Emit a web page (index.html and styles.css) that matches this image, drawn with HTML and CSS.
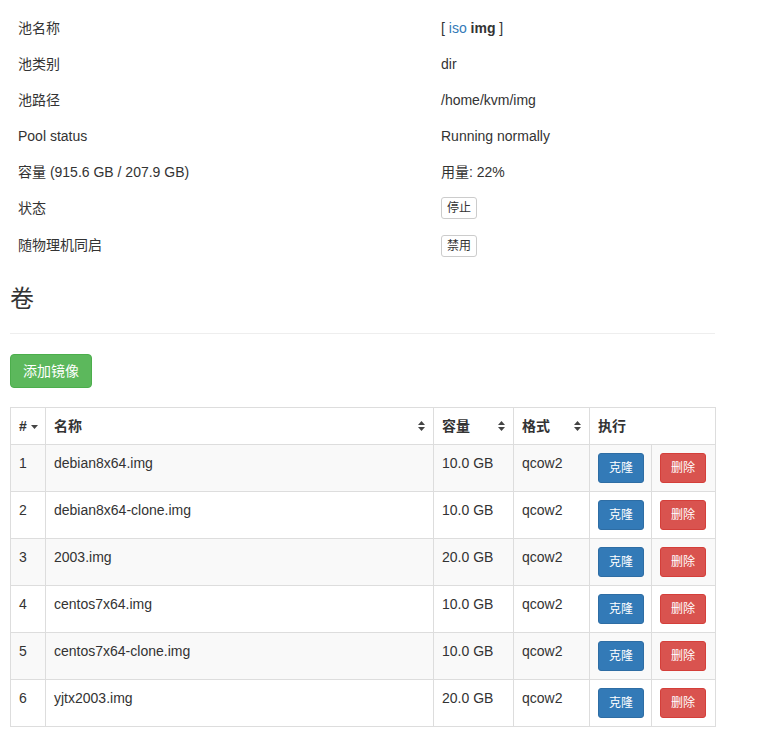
FILE: index.html
```html
<!DOCTYPE html>
<html lang="zh-CN">
  <head>
    <meta charset="UTF-8" />
    <meta name="viewport" content="width=device-width, initial-scale=1.0" />
    <title>存储池</title>
    <link rel="stylesheet" href="styles.css">
  </head>
  <body>
    <div class="container">
      <table class="info-table">
        <colgroup>
          <col class="info-label" />
          <col />
        </colgroup>
        <tr>
          <td>池名称</td>
          <td>[ <a href="#">iso</a> <strong>img</strong> ]</td>
        </tr>
        <tr>
          <td>池类别</td>
          <td>dir</td>
        </tr>
        <tr>
          <td>池路径</td>
          <td>/home/kvm/img</td>
        </tr>
        <tr>
          <td>Pool status</td>
          <td>Running normally</td>
        </tr>
        <tr>
          <td>容量 (915.6 GB / 207.9 GB)</td>
          <td>用量: 22%</td>
        </tr>
        <tr class="btn-row">
          <td>状态</td>
          <td><button class="btn btn-default btn-xs">停止</button></td>
        </tr>
        <tr class="btn-row">
          <td>随物理机同启</td>
          <td><button class="btn btn-default btn-xs">禁用</button></td>
        </tr>
      </table>

      <h3 class="page-header">卷</h3>

      <button class="btn btn-success">添加镜像</button>

      <table class="volumes">
        <colgroup>
          <col class="col-id" />
          <col class="col-name" />
          <col class="col-size" />
          <col class="col-format" />
          <col class="col-clone" />
          <col class="col-delete" />
        </colgroup>
        <thead>
          <tr>
            <th class="sorted">#<svg class="caret" width="7" height="4" viewBox="0 0 7 4"><path d="M0 0h7L3.5 4z" /></svg></th>
            <th>名称<svg class="sort" width="7" height="10" viewBox="0 0 7 10"><path d="M3.5 0L7 4H0z M0 6h7L3.5 10z" /></svg></th>
            <th>容量<svg class="sort" width="7" height="10" viewBox="0 0 7 10"><path d="M3.5 0L7 4H0z M0 6h7L3.5 10z" /></svg></th>
            <th>格式<svg class="sort" width="7" height="10" viewBox="0 0 7 10"><path d="M3.5 0L7 4H0z M0 6h7L3.5 10z" /></svg></th>
            <th colspan="2">执行</th>
          </tr>
        </thead>
        <tbody>
          <tr>
            <td>1</td>
            <td>debian8x64.img</td>
            <td>10.0 GB</td>
            <td>qcow2</td>
            <td><button class="btn btn-primary btn-sm">克隆</button></td>
            <td><button class="btn btn-danger btn-sm">删除</button></td>
          </tr>
          <tr>
            <td>2</td>
            <td>debian8x64-clone.img</td>
            <td>10.0 GB</td>
            <td>qcow2</td>
            <td><button class="btn btn-primary btn-sm">克隆</button></td>
            <td><button class="btn btn-danger btn-sm">删除</button></td>
          </tr>
          <tr>
            <td>3</td>
            <td>2003.img</td>
            <td>20.0 GB</td>
            <td>qcow2</td>
            <td><button class="btn btn-primary btn-sm">克隆</button></td>
            <td><button class="btn btn-danger btn-sm">删除</button></td>
          </tr>
          <tr>
            <td>4</td>
            <td>centos7x64.img</td>
            <td>10.0 GB</td>
            <td>qcow2</td>
            <td><button class="btn btn-primary btn-sm">克隆</button></td>
            <td><button class="btn btn-danger btn-sm">删除</button></td>
          </tr>
          <tr>
            <td>5</td>
            <td>centos7x64-clone.img</td>
            <td>10.0 GB</td>
            <td>qcow2</td>
            <td><button class="btn btn-primary btn-sm">克隆</button></td>
            <td><button class="btn btn-danger btn-sm">删除</button></td>
          </tr>
          <tr>
            <td>6</td>
            <td>yjtx2003.img</td>
            <td>20.0 GB</td>
            <td>qcow2</td>
            <td><button class="btn btn-primary btn-sm">克隆</button></td>
            <td><button class="btn btn-danger btn-sm">删除</button></td>
          </tr>
        </tbody>
      </table>
    </div>
  </body>
</html>
```

FILE: styles.css
```css
body {
  margin: 0;
  font-family: "Liberation Sans", "Noto Sans CJK SC", Arial, sans-serif;
  font-size: 14px;
  line-height: 20px;
  color: #333;
  background: #fff;
}
.container {
  width: 705px;
  padding: 10px;
}
a {
  color: #337ab7;
  text-decoration: none;
}
table {
  border-collapse: collapse;
  border-spacing: 0;
  width: 100%;
  table-layout: fixed;
}
.info-table {
  margin-bottom: 21px;
}
.info-label {
  width: 423px;
}
.info-table td {
  padding: 8px;
  vertical-align: middle;
}
.info-table .btn-row td {
  padding: 7px 8px 8px;
}
.page-header {
  margin: 0 0 20px;
  padding-bottom: 21px;
  font-size: 24px;
  font-weight: 400;
  line-height: 26px;
  border-bottom: 1px solid #eee;
}
.btn {
  display: inline-block;
  font-family: inherit;
  font-size: 14px;
  line-height: 20px;
  padding: 6px 12px;
  border: 1px solid transparent;
  border-radius: 4px;
  cursor: pointer;
  vertical-align: middle;
}
.btn-xs {
  font-size: 12px;
  line-height: 18px;
  padding: 1px 5px;
  border-radius: 3px;
}
.btn-sm {
  font-size: 12px;
  line-height: 18px;
  padding: 5px 10px;
  border-radius: 3px;
}
.btn-default {
  background: #fff;
  color: #333;
  border-color: #ccc;
}
.btn-success {
  background: #5cb85c;
  color: #fff;
  border-color: #4cae4c;
}
.btn-primary {
  background: #337ab7;
  color: #fff;
  border-color: #2e6da4;
}
.btn-danger {
  background: #d9534f;
  color: #fff;
  border-color: #d43f3a;
}
.volumes {
  margin-top: 19px;
  border: 1px solid #ddd;
}
.col-id {
  width: 35px;
}
.col-name {
  width: 388px;
}
.col-size {
  width: 80px;
}
.col-format {
  width: 76px;
}
.col-clone {
  width: 62px;
}
.col-delete {
  width: 64px;
}
.volumes th,
.volumes td {
  padding: 8px;
  border: 1px solid #ddd;
  text-align: left;
  vertical-align: top;
  white-space: nowrap;
}
.volumes th {
  font-weight: 700;
}
.volumes tbody tr:nth-child(odd) {
  background: #f9f9f9;
}
.sort {
  float: right;
  margin-top: 5px;
  fill: #444;
}
.caret {
  margin-left: 4px;
  vertical-align: middle;
  fill: #444;
}
```
